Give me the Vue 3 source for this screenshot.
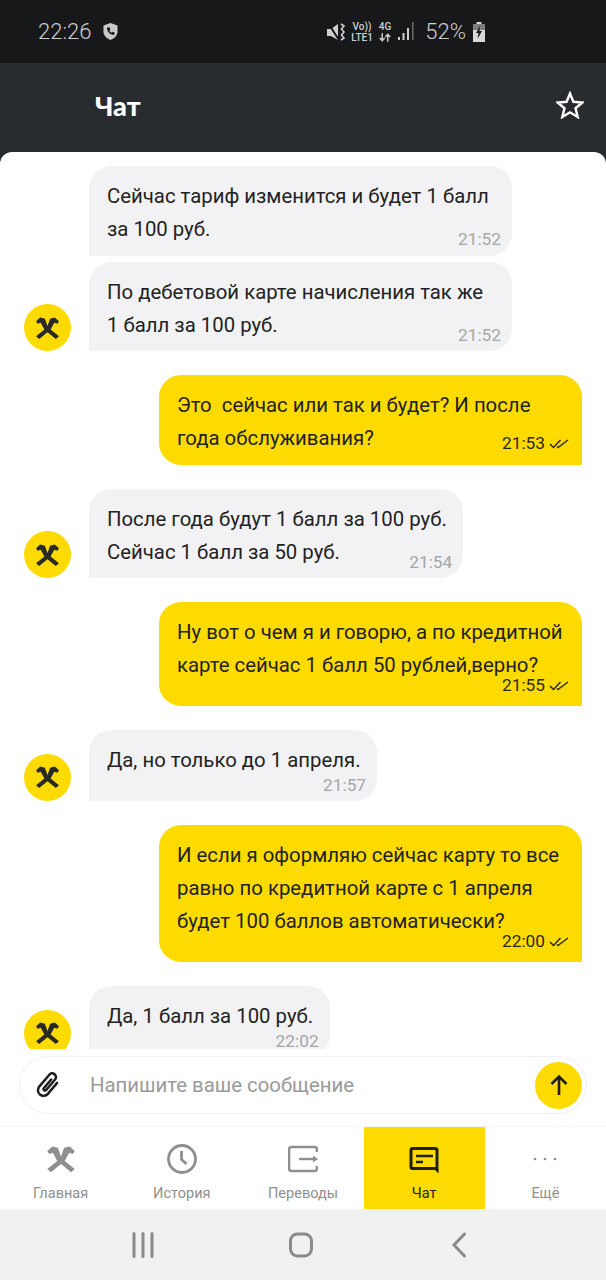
<template>
  <div class="phone">
    <div class="status">
      <div class="status-left">
        <span class="clock">22:26</span>
        <svg class="shield" viewBox="0 0 16 18">
          <path d="M8 0 15.500 2.600V9c0 4.300-3.200 7.400-7.500 9C3.700 16.400.5 13.300.5 9V2.600Z" fill="#c9c9c9" />
          <path d="M5 4.800 6.800 4.300l1 2.600-1.100 1c.5 1.100 1.300 1.900 2.400 2.400l1-1.100 2.500 1-.5 1.800c-.2.5-.6.7-1.200.7C7.400 12.300 4.500 9.300 4.300 5.900c0-.5.2-.9.7-1.100Z" fill="#16181a" />
        </svg>
      </div>
      <div class="status-right">
        <svg class="mute" viewBox="0 0 20 20">
          <path d="M0 7h4l7-5v16l-7-4H0Z" fill="#cfcfcf" />
          <path d="M1 1l11 17" stroke="#16181a" stroke-width="2" />
          <path d="M14 2l3 2-2.500 3 2.500 3-2.500 3 2.500 3-3 2" fill="none" stroke="#cfcfcf" stroke-width="1.600" />
        </svg>
        <div class="net net-volte"><span>Vo))</span><span>LTE1</span></div>
        <div class="net net-4g">
          <span>4G</span>
          <svg class="arrows" viewBox="0 0 13 9">
            <path d="M3.500 0v8M.8 5l2.700 3 2.700-3M9.500 9V1M6.800 4l2.700-3 2.700 3" fill="none" stroke="#cfcfcf" stroke-width="1.600" />
          </svg>
        </div>
        <svg class="signal" viewBox="0 0 16 19">
          <rect x="0" y="15" width="2" height="3" fill="#cfcfcf" />
          <rect x="4.500" y="11" width="2" height="7" fill="#cfcfcf" />
          <rect x="9" y="6" width="2" height="12" fill="#cfcfcf" />
          <rect x="14" y="0" width="1.500" height="18" fill="#6a6c6e" />
        </svg>
        <span class="pct">52%</span>
        <svg class="battery" viewBox="0 0 12 20">
          <path d="M3.500 0h5v2H12v18H0V2h3.500Z" fill="#d8d8d8" />
          <path d="M0 2h12v6H0Z" fill="#7b7c7d" />
          <path d="M7 4 3 11h2.500L4.500 17 9 9H6.500Z" fill="#16181a" />
        </svg>
      </div>
    </div>

    <header class="header">
      <span class="title">Чат</span>
      <svg class="star" viewBox="0 0 28 28">
        <path d="M14 2.500 17.400 10.800 26.400 11.500 19.500 17.300 21.700 26 14 21.300 6.300 26 8.500 17.300 1.600 11.500 10.600 10.800Z" fill="none" stroke="#fff" stroke-width="2.400" />
      </svg>
    </header>

    <main class="sheet">
      <div class="messages">
        <div
          v-for="m in messages"
          :key="m.time + m.lines[0]"
          class="row"
          :class="[m.out ? 'row-out' : 'row-in', { grouped: m.grouped }]"
        >
          <div v-if="!m.out" class="avatar-col">
            <div v-if="m.avatar" class="avatar">
              <svg viewBox="0 0 24 21">
                <path :d="hammers" fill="#2a2a24" />
              </svg>
            </div>
          </div>
          <div class="bubble" :class="{ compact: m.compact, wide: m.wide }">
            <div v-for="l in m.lines" :key="l" class="line">{{ l }}</div>
            <div class="meta">
              <span class="time">{{ m.time }}</span>
              <svg v-if="m.out" class="ticks" viewBox="0 0 20 11">
                <path d="M1 6l3.500 3.500L11.500 2M8 8.500l1 1L19 2" fill="none" stroke="#2a2a1a" stroke-width="1.500" />
              </svg>
            </div>
          </div>
        </div>
      </div>

      <div class="composer">
        <div class="input">
          <svg class="clip" viewBox="0 0 24 24">
            <path d="M16.500 6v11.500a4.500 4.500 0 0 1-9 0V5a3 3 0 0 1 6 0v11a1.200 1.200 0 0 1-2.400 0V7" transform="rotate(40 12 12)" fill="none" stroke="#1f1f1f" stroke-width="2" stroke-linecap="round" />
          </svg>
          <span class="placeholder">Напишите ваше сообщение</span>
          <button class="send">
            <svg viewBox="0 0 24 24">
              <path d="M12 22V3.500M4.500 11 12 3.500 19.500 11" fill="none" stroke="#1f1f1f" stroke-width="2.600" />
            </svg>
          </button>
        </div>
      </div>
    </main>

    <nav class="tabs">
      <div class="tab">
        <svg class="tab-icon" viewBox="0 0 24 21">
          <path :d="hammers" fill="#8f8f8f" />
        </svg>
        <span>Главная</span>
      </div>
      <div class="tab">
        <svg class="tab-icon" viewBox="0 0 30 30">
          <circle cx="15" cy="15" r="13.500" fill="none" stroke="#8f8f8f" stroke-width="2.800" />
          <path d="M14.500 7v8.500l5 4.500" fill="none" stroke="#8f8f8f" stroke-width="2.800" />
        </svg>
        <span>История</span>
      </div>
      <div class="tab">
        <svg class="tab-icon" viewBox="0 0 30 30">
          <path d="M29 8V5.500A2.500 2.500 0 0 0 26.500 3H3.500A2.500 2.500 0 0 0 1 5.500v19A2.500 2.500 0 0 0 3.500 27h23a2.500 2.500 0 0 0 2.500-2.500V22" fill="none" stroke="#8f8f8f" stroke-width="2.600" />
          <path d="M11 15h15" stroke="#8f8f8f" stroke-width="2.400" />
          <path d="M25 11.500 30 15l-5 3.500Z" fill="#8f8f8f" />
        </svg>
        <span>Переводы</span>
      </div>
      <div class="tab active">
        <svg class="tab-icon" viewBox="0 0 30 30">
          <path d="M3.500 4.500h23A1.500 1.500 0 0 1 28 6v18.500H3.500A1.500 1.500 0 0 1 2 23V6a1.500 1.500 0 0 1 1.500-1.500Z" fill="none" stroke="#1f1f14" stroke-width="3" />
          <path d="M25 25h4.500v4.500Z" fill="#1f1f14" />
          <path d="M7 12h17M7 18h7" stroke="#1f1f14" stroke-width="2.600" />
        </svg>
        <span>Чат</span>
      </div>
      <div class="tab">
        <svg class="tab-icon" viewBox="0 0 30 30">
          <circle cx="5" cy="15" r="1.300" fill="#8f8f8f" />
          <circle cx="15" cy="15" r="1.300" fill="#8f8f8f" />
          <circle cx="25" cy="15" r="1.300" fill="#8f8f8f" />
        </svg>
        <span>Ещё</span>
      </div>
    </nav>

    <div class="system">
      <svg class="sys-recent" viewBox="0 0 24 26">
        <path d="M3 1.500v23M12 1.500v23M21 1.500v23" stroke="#8a8a8a" stroke-width="3" stroke-linecap="round" />
      </svg>
      <svg class="sys-home" viewBox="0 0 24 26">
        <rect x="1.500" y="2" width="21" height="22" rx="7" fill="none" stroke="#8a8a8a" stroke-width="3" />
      </svg>
      <svg class="sys-back" viewBox="0 0 16 26">
        <path d="M13.500 2 3 13l10.500 11" fill="none" stroke="#8a8a8a" stroke-width="3" stroke-linecap="round" />
      </svg>
    </div>
  </div>
</template>

<script setup>
const hammers = 'M12 8.500 14.500 1.500 19 .5 23 4 21.500 6.500 18.500 5.500 15 12 23 18.500 20 21 12 14.500 4 21 1 18.500 9 12 5.500 5.500 2.500 6.500 1 4 5 .5 9.500 1.500Z'

const messages = [
  { lines: ['Сейчас тариф изменится и будет 1 балл', 'за 100 руб.'], time: '21:52', compact: true, wide: true, grouped: true },
  { lines: ['По дебетовой карте начисления так же', '1 балл за 100 руб.'], time: '21:52', compact: true, wide: true, avatar: true },
  { lines: ['Это  сейчас или так и будет? И после', 'года обслуживания?'], time: '21:53', out: true, compact: true, wide: true },
  { lines: ['После года будут 1 балл за 100 руб.', 'Сейчас 1 балл за 50 руб.'], time: '21:54', compact: true, avatar: true },
  { lines: ['Ну вот о чем я и говорю, а по кредитной', 'карте сейчас 1 балл 50 рублей,верно?'], time: '21:55', out: true, wide: true },
  { lines: ['Да, но только до 1 апреля.'], time: '21:57', avatar: true },
  { lines: ['И если я оформляю сейчас карту то все', 'равно по кредитной карте с 1 апреля', 'будет 100 баллов автоматически?'], time: '22:00', out: true, wide: true },
  { lines: ['Да, 1 балл за 100 руб.'], time: '22:02', avatar: true }
]
</script>

<style>
html, body { margin: 0; background: #fff; }
</style>

<style scoped>
.phone {
  width: 606px;
  height: 1280px;
  display: flex;
  flex-direction: column;
  background: #282c2f;
  font-family: Roboto, "Noto Sans", sans-serif;
  color: #222;
  overflow: hidden;
}

.status {
  height: 63px;
  flex: none;
  background: #16181a;
  color: #cfcfcf;
  display: flex;
  align-items: center;
  justify-content: space-between;
  padding: 0 121px 0 38px;
}
.status-left, .status-right { display: flex; align-items: center; }
.clock { font-size: 22px; font-weight: 300; }
.shield { width: 15px; height: 17px; margin-left: 12px; }
.mute { width: 20px; height: 20px; }
.net {
  display: flex;
  flex-direction: column;
  align-items: center;
  font-size: 10px;
  line-height: 11px;
  font-weight: 500;
}
.net-volte { margin-left: 4px; }
.net-4g { margin-left: 6px; }
.arrows { width: 12px; height: 9px; margin-top: 1px; }
.signal { width: 16px; height: 19px; margin-left: 7px; }
.pct { font-size: 22px; font-weight: 300; margin-left: 11px; }
.battery { width: 12px; height: 20px; margin-left: 7px; }

.header {
  height: 89px;
  flex: none;
  display: flex;
  align-items: center;
  justify-content: space-between;
  padding: 0 22px 0 95px;
  box-sizing: border-box;
}
.title {
  font-family: Lato, Inter, sans-serif;
  font-size: 27px;
  font-weight: 900;
  color: #fff;
  margin-top: -5px;
}
.star { width: 28px; height: 28px; margin-top: -5px; }

.sheet {
  flex: 1;
  min-height: 0;
  background: #fff;
  border-radius: 12px 12px 0 0;
  display: flex;
  flex-direction: column;
}
.messages {
  flex: 1;
  min-height: 0;
  overflow: hidden;
  padding: 14px 24px 0 0;
  display: flex;
  flex-direction: column;
  gap: 23.800px;
}
.row { display: flex; align-items: flex-end; flex: none; }
.row.grouped { margin-bottom: -17.800px; }
.row-out { justify-content: flex-end; }
.avatar-col { width: 89px; flex: none; padding-left: 23.500px; box-sizing: border-box; }
.avatar {
  width: 47px;
  height: 47px;
  border-radius: 50%;
  background: #fedb00;
  display: flex;
  align-items: center;
  justify-content: center;
}
.avatar svg { width: 25px; height: 22px; }

.bubble {
  background: #f2f2f4;
  border-radius: 22px 22px 22px 0;
  padding: 14px 11px 0 18px;
  font-size: 20.350px;
  line-height: 33px;
  box-sizing: border-box;
}
.bubble.wide { width: 423px; }
.row-out .bubble {
  background: #fedb00;
  border-radius: 22px 22px 0 22px;
  padding-right: 13px;
}
.line { white-space: pre; padding-right: 5.500px; }
.meta {
  display: flex;
  justify-content: flex-end;
  align-items: flex-start;
  height: 24px;
  line-height: 16px;
}
.bubble.compact .meta { margin-top: -15px; height: 24.700px; }
.row-out .bubble .meta { margin-top: -5px; height: 29px; }
.row-out .bubble.compact .meta { margin-top: -20px; height: 29.700px; }
.time { font-size: 17.300px; color: #a5a6a8; }
.row-out .time { color: #2a2a1a; }
.ticks { width: 20px; height: 11px; margin: 3px 0 0 4px; }

.composer { flex: none; height: 78px; padding: 7px 19px 0; box-sizing: border-box; }
.input {
  height: 58px;
  border: 1px solid #f0f0f0;
  border-radius: 29px;
  box-sizing: border-box;
  display: flex;
  align-items: center;
  padding: 0 4px 0 13px;
}
.clip { width: 30px; height: 30px; flex: none; }
.placeholder { flex: 1; margin-left: 27px; font-size: 20.350px; color: #9a9a9a; }
.send {
  width: 47px;
  height: 47px;
  flex: none;
  border: 0;
  padding: 0;
  border-radius: 50%;
  background: #fedb00;
  display: flex;
  align-items: center;
  justify-content: center;
}
.send svg { width: 24px; height: 24px; }

.tabs {
  height: 82px;
  flex: none;
  display: grid;
  grid-template-columns: repeat(5, 1fr);
  background: #fff;
  box-shadow: 0 -1px 0 #f3f3f3;
}
.tab {
  display: flex;
  flex-direction: column;
  align-items: center;
  padding-top: 17px;
  font-size: 14.500px;
  color: #8f8f8f;
}
.tab span { margin-top: 11px; line-height: 17px; }
.tab.active { background: #fedb00; color: #1f1f14; }
.tab-icon { width: 30px; height: 30px; }

.system {
  height: 71px;
  flex: none;
  background: #f1f1f1;
  display: grid;
  grid-template-columns: repeat(3, 158px);
  justify-content: center;
  align-items: center;
  justify-items: center;
  padding-right: 4px;
}
.sys-recent { width: 24px; height: 26px; }
.sys-home { width: 24px; height: 26px; }
.sys-back { width: 16px; height: 26px; }
</style>
